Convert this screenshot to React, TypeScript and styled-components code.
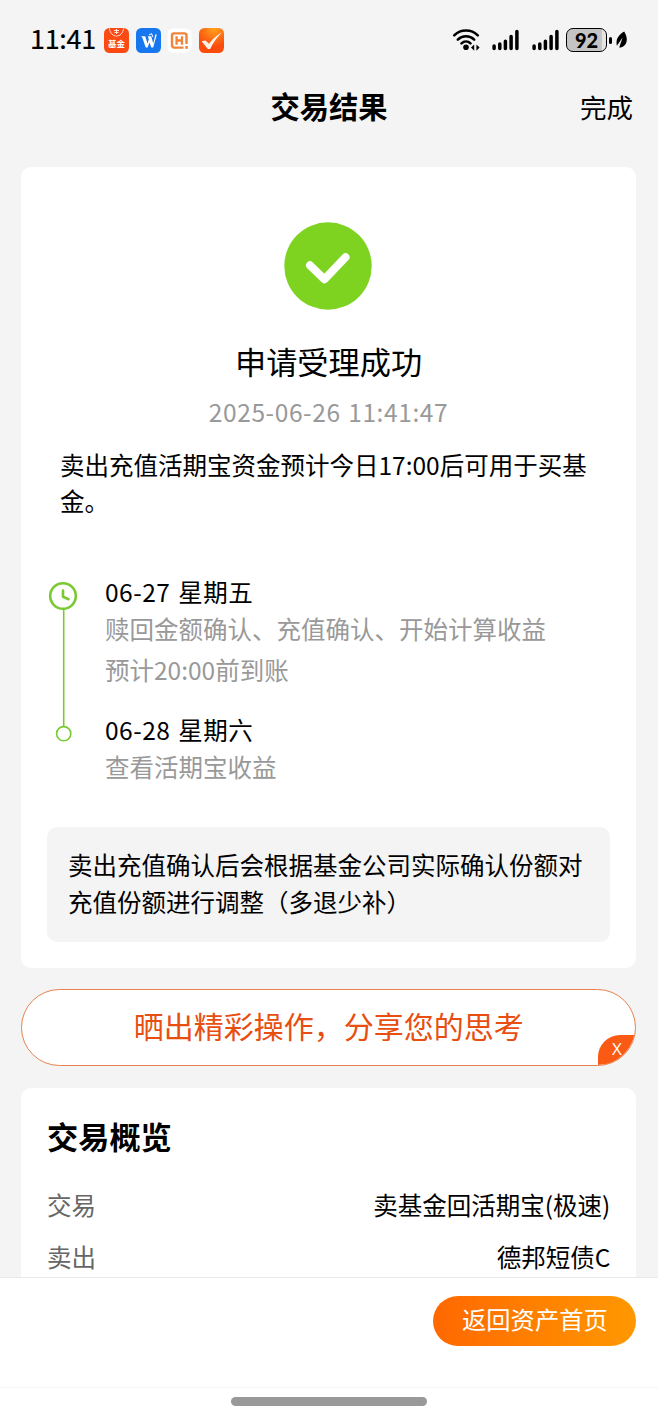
import React from "react";
import styled, { createGlobalStyle } from "styled-components";

const GlobalStyle = createGlobalStyle`
  * { box-sizing: border-box; }
  body {
    margin: 0;
    background: #f4f4f4;
    color: #000;
    font-family: "Noto Sans CJK SC", "Noto Sans", sans-serif;
  }
`;

const Screen = styled.div`
  display: flex;
  flex-direction: column;
  width: 658px;
  height: 1416px;
  overflow: hidden;
  background: #f4f4f4;
`;

const StatusBar = styled.header`
  display: flex;
  align-items: center;
  flex: none;
  height: 80px;
  padding: 0 30px;
`;

const Clock = styled.span`
  width: 74px;
  padding-bottom: 5px;
  font-size: 27px;
  font-weight: 400;
  line-height: 37px;
  letter-spacing: -0.3px;
  -webkit-text-stroke: 0.2px #000;
  white-space: nowrap;
`;

const AppIcons = styled.div`
  display: flex;
  gap: 6.5px;
  flex: 1;
`;

const SystemIcons = styled.div`
  display: flex;
  align-items: center;
`;

const NavBar = styled.nav`
  display: grid;
  grid-template-columns: 1fr auto 1fr;
  align-items: center;
  flex: none;
  height: 54px;
  padding: 0 25px;
`;

const NavTitle = styled.h1`
  grid-column: 2;
  margin: 0;
  padding-bottom: 4px;
  font-size: 29.3px;
  font-weight: 700;
  line-height: 40px;
`;

const NavAction = styled.button`
  justify-self: end;
  padding: 0;
  border: 0;
  background: none;
  color: #000;
  font: inherit;
  font-size: 26.5px;
  line-height: 40px;
`;

const Content = styled.main`
  flex: 1;
  min-height: 0;
  overflow: hidden;
  padding: 33px 21.6px 0 21px;
`;

const Card = styled.section`
  border-radius: 10px;
  background: #fff;
`;

const ResultCard = styled(Card)`
  display: flex;
  flex-direction: column;
  height: 801px;
  padding: 55px 26.4px 26px 26px;
`;

const SuccessIcon = styled.svg`
  align-self: center;
  flex: none;
  width: 88px;
  height: 88px;
  margin-right: 1px;
`;

const ResultTitle = styled.h2`
  margin: 29px 0 0;
  font-size: 31.2px;
  font-weight: 400;
  line-height: 44px;
  text-align: center;
`;

const Timestamp = styled.time`
  margin-top: 11px;
  color: #999;
  font-size: 24.5px;
  line-height: 36px;
  letter-spacing: 0.6px;
  word-spacing: 1.5px;
  text-align: center;
`;

const Summary = styled.p`
  margin: 17px 0 0 13px;
  font-size: 24.5px;
  line-height: 36px;
`;

const Timeline = styled.div`
  display: flex;
  gap: 26px;
  margin-top: 55px;
`;

const TimelineRail = styled.svg`
  flex: none;
  width: 32px;
  height: 170px;
  margin-top: 1px;
`;

const Steps = styled.div`
  display: flex;
  flex-direction: column;
  gap: 24px;
`;

const StepDate = styled.div`
  font-size: 24.5px;
  line-height: 36px;
  letter-spacing: 0.5px;
  word-spacing: 1.9px;
`;

const StepText = styled.div<{ $gap?: number }>`
  margin-top: ${({ $gap = 0 }) => $gap}px;
  color: #999;
  font-size: 24.5px;
  line-height: 37px;
`;

const Notice = styled.p`
  margin: auto 0 0;
  height: 115px;
  padding: 20px 21px;
  border-radius: 10px;
  background: #f4f4f4;
  font-size: 24.5px;
  line-height: 36.6px;
`;

const SharePill = styled.div`
  position: relative;
  display: flex;
  justify-content: center;
  align-items: center;
  height: 77px;
  margin: 21px 0 22px;
  padding-bottom: 6px;
  overflow: hidden;
  border: 1px solid #e58252;
  border-radius: 39px;
  background: #fff;
  color: #e84e10;
  font-size: 30px;
  line-height: 44px;
`;

const CloseTab = styled.button`
  position: absolute;
  right: 0;
  bottom: 0;
  width: 37px;
  height: 30px;
  padding: 0 0 2px;
  border: 0;
  border-radius: 22px 0 0 0;
  background: #fa5a14;
  color: #fff;
  font: 400 17px/28px "Open Sans", sans-serif;
`;

const OverviewCard = styled(Card)`
  height: 260px;
  padding: 24px 26px 0;
`;

const OverviewTitle = styled.h2`
  margin: 0 0 19px;
  font-size: 31.2px;
  font-weight: 700;
  line-height: 48px;
`;

const DetailRow = styled.div`
  display: flex;
  justify-content: space-between;
  height: 52px;
  align-items: center;
  font-size: 24.5px;
  line-height: 36px;
`;

const DetailLabel = styled.span`
  color: #666;
`;

const Footer = styled.footer`
  flex: none;
  height: 139px;
  border-top: 1px solid #e9e9e9;
  background: #fff;
`;

const FooterActions = styled.div`
  display: flex;
  justify-content: flex-end;
  height: 110px;
  padding: 18px 21.6px 0;
  border-bottom: 1px solid #f6f6f6;
`;

const HomeButton = styled.button`
  width: 203px;
  height: 50px;
  padding: 0 0 4px;
  border: 0;
  border-radius: 25px;
  background: linear-gradient(90deg, #ff6800, #ff9800);
  color: #fff;
  font: inherit;
  font-size: 24.3px;
  line-height: 46px;
`;

const HomeIndicator = styled.div`
  width: 196px;
  height: 9px;
  margin: 9px auto 0;
  border-radius: 5px;
  background: #999;
`;

const Battery = styled.div`
  display: flex;
  align-items: center;
  gap: 2px;
`;

const BatteryBody = styled.div`
  width: 41px;
  height: 24px;
  border: 1.6px solid #000;
  border-radius: 7px;
  background: linear-gradient(90deg, #c4c4c4 35px, #e4e4e4 35px);
  font: 900 20px/22px Lato, sans-serif;
  text-align: center;
`;

const BatteryTip = styled.div`
  width: 3px;
  height: 7px;
  border-radius: 2px;
  background: #000;
`;

const FundIcon = () => (
  <svg width="25" height="25" viewBox="0 0 25 25">
    <rect width="25" height="25" rx="5.5" fill="#fb4a14" />
    <path d="M5.5 0.5C6.5 10.5 18.5 10.5 19.5 0.5" fill="none" stroke="#ffd8cb" strokeWidth="1" />
    <path d="M10 2.5h5M10.5 4.5h4M12.5 1v5" stroke="#ffe4da" strokeWidth="1" />
    <text x="12.5" y="19.2" textAnchor="middle" fontSize="8.5" fontWeight="700" fill="#fff">基金</text>
  </svg>
);

const WriterIcon = () => (
  <svg width="25" height="25" viewBox="0 0 25 25">
    <rect width="25" height="25" rx="5.5" fill="#1677ef" />
    <path d="M5 8.2h4.2l2.3 7.3 1.3-4.2-1-3.1h3.4l2.1 7.3 2-9h1.5L17.2 19.6h-1.9l-1.8-5.2-1.9 5.2H9.7L6.3 9.6z" fill="#fff" />
    <path d="M13 7l2.6-1.4 1.2 3.4" fill="none" stroke="#fff" strokeWidth="1" />
  </svg>
);

const BoardIcon = () => (
  <svg width="25" height="25" viewBox="0 0 25 25">
    <rect x="0.5" y="0.5" width="24" height="24" rx="5.5" fill="#fff" />
    <path d="M16.5 19.6H7a2 2 0 0 1-2-2V7.4a2 2 0 0 1 2-2h10.5a2 2 0 0 1 2 2v8.6" fill="none" stroke="#f1843b" strokeWidth="2.4" />
    <path d="M9.6 8.2v8.6M15 8.2v8.6M9.6 12.5H15" stroke="#f1843b" strokeWidth="2.3" />
    <rect x="18.3" y="18" width="2.6" height="2.8" fill="#f1843b" />
  </svg>
);

const TaskIcon = () => (
  <svg width="25" height="25" viewBox="0 0 25 25">
    <defs>
      <radialGradient id="task" cx="0.6" cy="0" r="0.75">
        <stop offset="0" stopColor="#ffa51f" />
        <stop offset="1" stopColor="#fb4c0c" />
      </radialGradient>
    </defs>
    <rect width="25" height="25" rx="5.5" fill="url(#task)" />
    <path d="M2.6 13.2l3.8-.6 3.6 3.1C13 11.8 17 7.7 22.8 4.6 18 9.2 14 15 11.2 20.9H8.8z" fill="#fff2e8" />
  </svg>
);

const WifiIcon = () => (
  <svg width="29" height="24" viewBox="0 0 29 24">
    <g fill="none" stroke="#000" strokeWidth="2.6" strokeLinecap="round">
      <path d="M2.2 7.3C8.7.8 19.3.8 25.8 7.3" />
      <path d="M5.8 11.6c4.5-4.5 11.9-4.5 16.4 0" />
      <path d="M9.5 15.4c2.6-2.5 6.4-2.5 9 0" />
    </g>
    <circle cx="14" cy="19.3" r="2.8" />
    <path d="M19 19.6l3.2-3.2v6.4zM27.6 19.6l-3.2-3.2v6.4z" />
  </svg>
);

const SignalIcon = () => (
  <svg width="27" height="22" viewBox="0 0 27 22">
    <g stroke="#000" strokeWidth="3.5" strokeLinecap="round">
      <path d="M2.1 17v2.4M7.8 15v4.4M13.4 12.3v7.1M19.1 7.5v11.9M24.9 2.4v17" />
    </g>
  </svg>
);

const LeafIcon = () => (
  <svg width="12" height="18" viewBox="0 0 12 18">
    <path d="M8.2.5C2.5 4-.6 8.5.9 14.7L6.6 6.5 3.2 16.6C9.6 16.6 13.8 9.5 8.2.5z" />
  </svg>
);

const Spacer = styled.span<{ $w: number }>`
  width: ${({ $w }) => $w}px;
`;

const details = [
  { label: "交易", value: "卖基金回活期宝(极速)" },
  { label: "卖出", value: "德邦短债C" },
];

const App = () => (
  <Screen>
    <GlobalStyle />
    <StatusBar>
      <Clock>11:41</Clock>
      <AppIcons>
        <FundIcon />
        <WriterIcon />
        <BoardIcon />
        <TaskIcon />
      </AppIcons>
      <SystemIcons>
        <WifiIcon />
        <Spacer $w={11} />
        <SignalIcon />
        <Spacer $w={13} />
        <SignalIcon />
        <Spacer $w={7} />
        <Battery>
          <BatteryBody>92</BatteryBody>
          <BatteryTip />
        </Battery>
        <Spacer $w={4} />
        <LeafIcon />
      </SystemIcons>
    </StatusBar>
    <NavBar>
      <NavTitle>交易结果</NavTitle>
      <NavAction>完成</NavAction>
    </NavBar>
    <Content>
      <ResultCard>
        <SuccessIcon viewBox="0 0 88 88">
          <circle cx="44" cy="44" r="43.7" fill="#7ed321" />
          <path d="M26 43.3L40.5 57.3 61.5 35.2" fill="none" stroke="#fff" strokeWidth="8" strokeLinecap="round" strokeLinejoin="round" />
        </SuccessIcon>
        <ResultTitle>申请受理成功</ResultTitle>
        <Timestamp>2025-06-26 11:41:47</Timestamp>
        <Summary>卖出充值活期宝资金预计今日17:00后可用于买基金。</Summary>
        <Timeline>
          <TimelineRail viewBox="0 0 32 170">
            <g fill="none" stroke="#7ac931">
              <circle cx="16" cy="21" r="12.8" strokeWidth="2.6" />
              <path d="M16 15.5v6.3l5.5 2.4" strokeWidth="2.6" strokeLinecap="round" strokeLinejoin="round" />
              <path d="M16.7 34v117" strokeWidth="1.6" />
              <circle cx="16.7" cy="158.7" r="7.1" strokeWidth="1.6" />
            </g>
          </TimelineRail>
          <Steps>
            <div>
              <StepDate>06-27 星期五</StepDate>
              <StepText>赎回金额确认、充值确认、开始计算收益</StepText>
              <StepText $gap={4}>预计20:00前到账</StepText>
            </div>
            <div>
              <StepDate>06-28 星期六</StepDate>
              <StepText>查看活期宝收益</StepText>
            </div>
          </Steps>
        </Timeline>
        <Notice>卖出充值确认后会根据基金公司实际确认份额对充值份额进行调整（多退少补）</Notice>
      </ResultCard>
      <SharePill>
        晒出精彩操作，分享您的思考
        <CloseTab>X</CloseTab>
      </SharePill>
      <OverviewCard>
        <OverviewTitle>交易概览</OverviewTitle>
        {details.map((item) => (
          <DetailRow key={item.label}>
            <DetailLabel>{item.label}</DetailLabel>
            <span>{item.value}</span>
          </DetailRow>
        ))}
      </OverviewCard>
    </Content>
    <Footer>
      <FooterActions>
        <HomeButton>返回资产首页</HomeButton>
      </FooterActions>
      <HomeIndicator />
    </Footer>
  </Screen>
);

export default App;
